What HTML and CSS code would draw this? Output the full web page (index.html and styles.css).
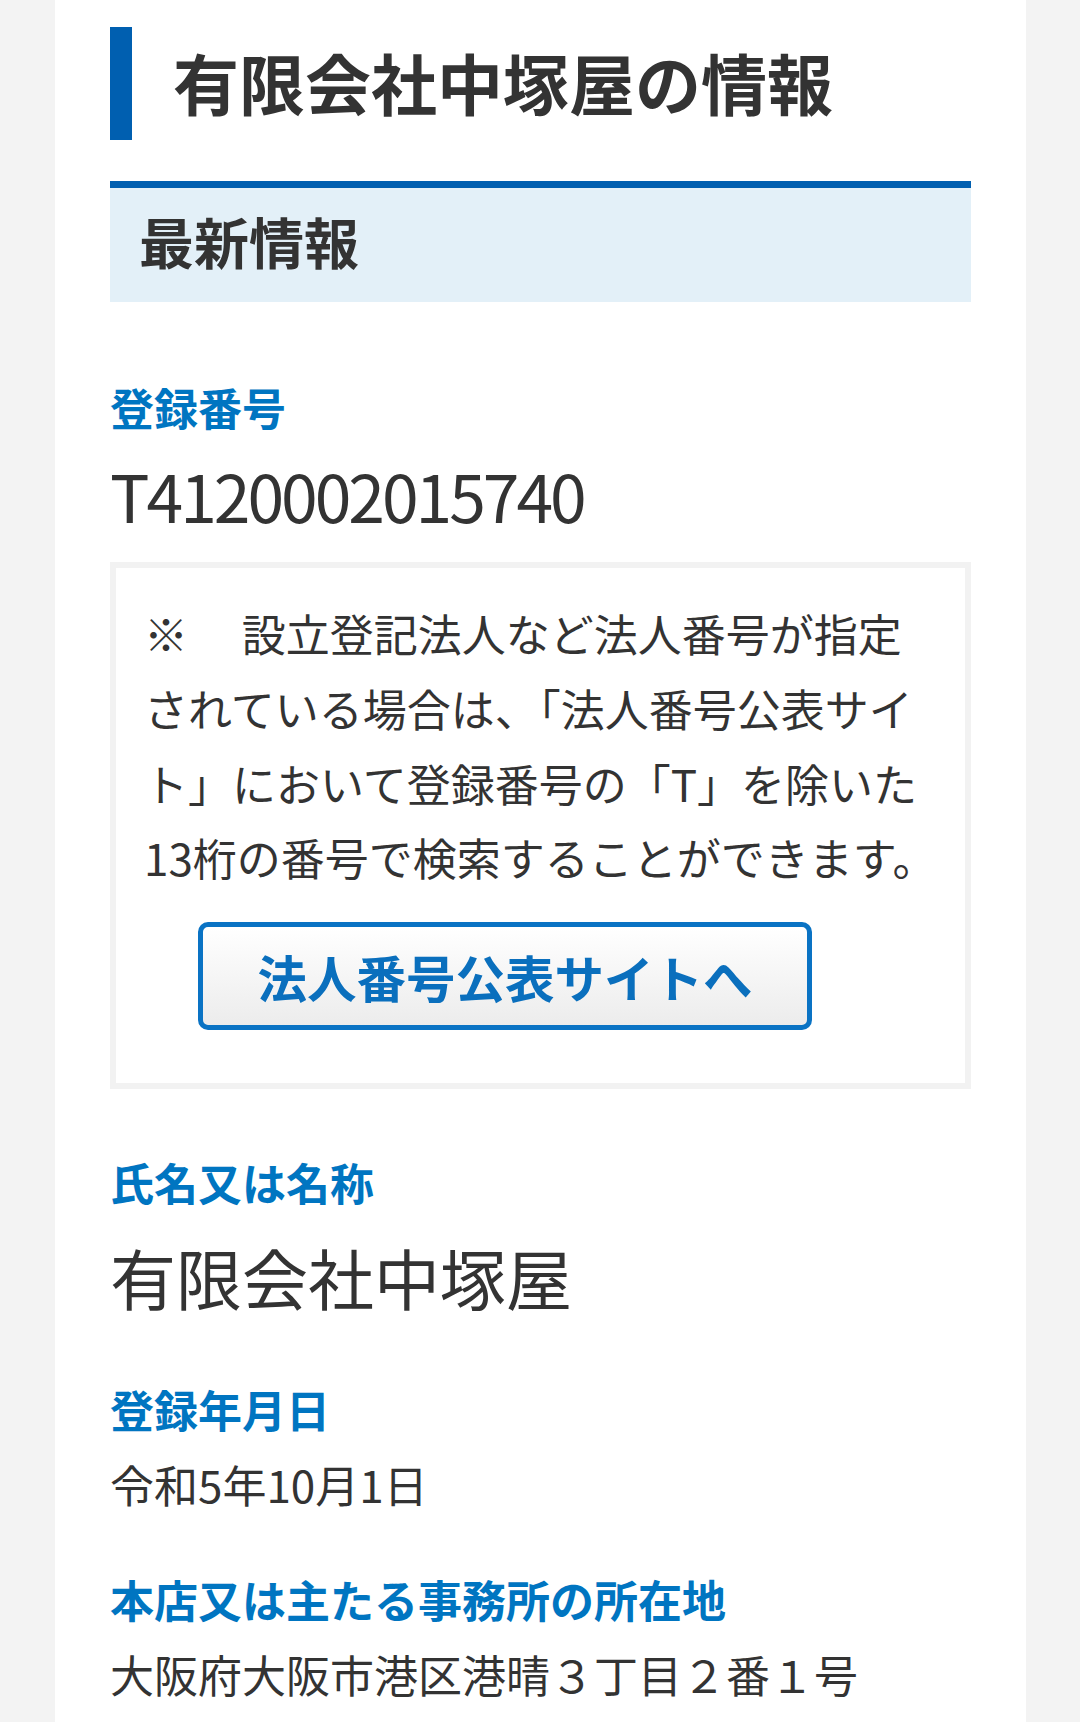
FILE: index.html
```html
<!DOCTYPE html>
<html lang="ja">
<head>
    <meta charset="UTF-8">
    <meta name="viewport" content="width=device-width, initial-scale=1.0">
    <title>有限会社中塚屋の情報</title>
    <link rel="stylesheet" href="styles.css">
</head>
<body>
    <div class="container">
        <h1 class="page-title">有限会社中塚屋の情報</h1>

        <h2 class="section-title">最新情報</h2>

        <dl class="info-list">
            <dt>登録番号</dt>
            <dd>
                <div class="reg-number">T4120002015740</div>
                <div class="notice">
                    <p>※&#x3000; 設立登記法人など法人番号が指定されている場合は、「法人番号公表サイト」において登録番号の「T」を除いた13桁の番号で検索することができます。</p>
                    <button class="site-button">法人番号公表サイトへ</button>
                </div>
            </dd>

            <dt>氏名又は名称</dt>
            <dd class="large">有限会社中塚屋</dd>

            <dt>登録年月日</dt>
            <dd>令和5年10月1日</dd>

            <dt>本店又は主たる事務所の所在地</dt>
            <dd>大阪府大阪市港区港晴３丁目２番１号</dd>
        </dl>
    </div>
</body>
</html>
```

FILE: styles.css
```css
body {
    margin: 0;
    background-color: #f3f3f3;
    color: #333;
    font-family: "Noto Sans CJK JP", "Noto Sans", sans-serif;
    font-size: 44px;
}

.container {
    background: #fff;
    width: 861px;
    min-height: 100vh;
    margin: 0 54px 0 55px;
    padding: 27px 55px 10px;
    box-sizing: content-box;
}

.page-title {
    margin: 0;
    border-left: 22px solid #005fb0;
    padding: 0 0 5px 41px;
    font-size: 66px;
    font-weight: 700;
    line-height: 108px;
}

.section-title {
    margin: 41px 0 0;
    border-top: 7px solid #005fb0;
    background-color: #e3f0f8;
    padding: 12px 0 22px 29px;
    font-size: 55px;
    font-weight: 700;
    line-height: 80px;
}

.info-list {
    margin: 72px 0 0;
}

.info-list dt {
    color: #0075c1;
    font-weight: 700;
    line-height: 66px;
    margin-bottom: 5px;
}

.info-list dd {
    margin: 0 0 44px;
    line-height: 1.7;
}

.info-list dd.large {
    font-size: 66px;
}

.reg-number {
    font-size: 66px;
    line-height: 99px;
    letter-spacing: -3px;
}

.notice {
    margin: 18px 0 60px;
    border: 6px solid #f2f2f2;
    padding: 28px 21px 53px 28px;
}

.notice p {
    margin: 0;
    width: 800px;
    line-height: 74.8px;
}

.site-button {
    display: block;
    width: 614px;
    height: 108px;
    margin: 27px 0 0 54px;
    border: 5px solid #0a73c4;
    border-radius: 10px;
    background: linear-gradient(#fff, #ececec);
    color: #0a6fbd;
    font-family: inherit;
    font-size: 49.5px;
    font-weight: 700;
    cursor: pointer;
}
```
